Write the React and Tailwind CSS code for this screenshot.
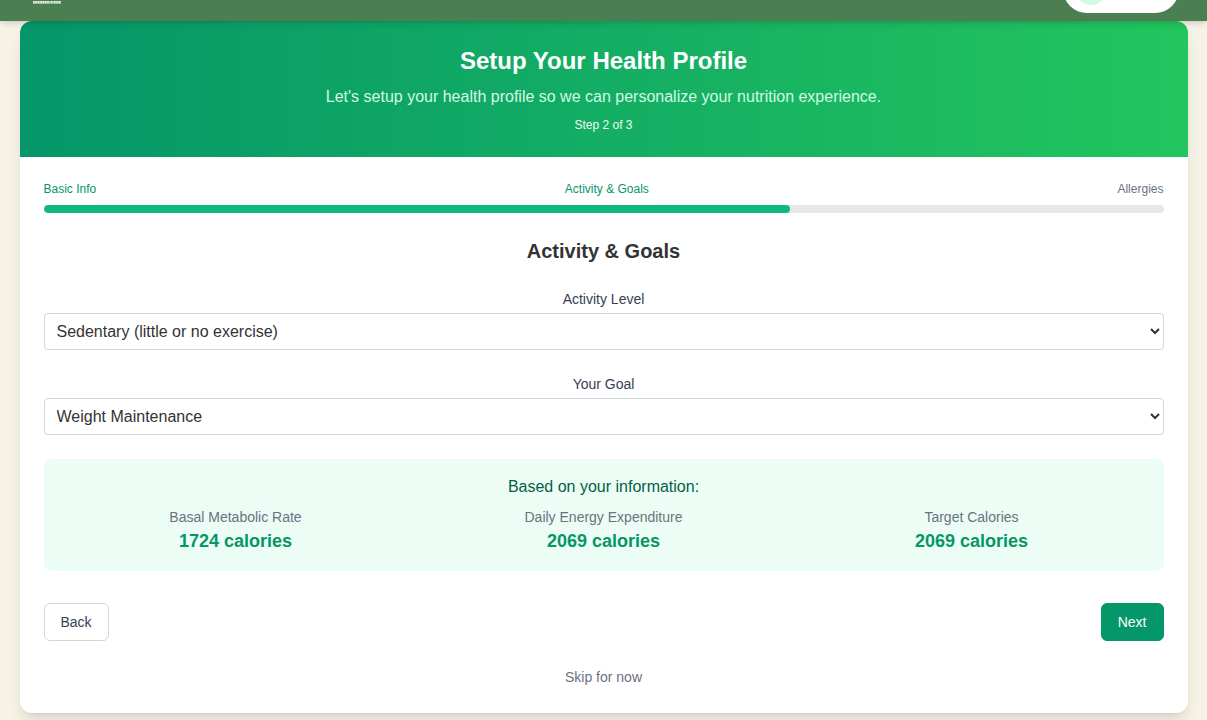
const label = "block text-center text-sm text-gray-700";
const select =
  "mt-1 block h-[37px] w-full rounded border border-gray-300 bg-white px-2 text-base text-[#333333]";

function Stat({ name, value }) {
  return (
    <div>
      <p className="text-sm text-[#6b7280]">{name}</p>
      <p className="text-lg font-bold text-[#059669]">{value}</p>
    </div>
  );
}

export default function App() {
  return (
    <div className="min-h-screen bg-[#f7f2e6] font-['Liberation_Sans',Arial,sans-serif] text-[#333333]">
      <header className="relative z-10 flex h-[21px] items-end justify-between overflow-hidden bg-[#4b7f52] pr-7 pl-8 shadow-md">
        <svg className="mb-[17px] h-3 w-8 shrink-0" viewBox="0 0 32 12" aria-hidden="true">
          <path d="M1 10.3H29" stroke="#a9c2aa" strokeWidth="2.6" />
          <path d="M1 10.3H17M19 10.3H21M22 10.3H29" stroke="#e3ebe0" strokeWidth="2.6" strokeDasharray="1.4 1" />
        </svg>
        <div className="mb-2 flex h-12 w-[116px] shrink-0 items-end rounded-full bg-white p-2 pl-3">
          <span className="size-8 rounded-full bg-[#d1fae5]" />
        </div>
      </header>

      <main className="mx-auto max-w-[1168px] pb-5">
        <div className="overflow-hidden rounded-xl bg-white shadow-lg">
          <div className="bg-[linear-gradient(to_right,#059669,#22c55e)] p-6 text-center text-white">
            <h1 className="text-2xl font-bold">Setup Your Health Profile</h1>
            <p className="mt-2 text-base text-[#d1fae5]">
              Let's setup your health profile so we can personalize your nutrition experience.
            </p>
            <p className="mt-2 text-xs text-[#ecfdf5]">Step 2 of 3</p>
          </div>

          <div className="p-6">
            <div className="flex justify-between text-xs text-[#059669]">
              <span>Basic Info</span>
              <span>Activity &amp; Goals</span>
              <span className="text-[#6b7280]">Allergies</span>
            </div>
            <div className="mt-2 h-2 overflow-hidden rounded-full bg-[#e5e7eb]">
              <div className="h-full w-2/3 rounded-full bg-[#10b981]" />
            </div>

            <h2 className="mt-6 text-center text-xl font-bold">Activity &amp; Goals</h2>

            <form className="mt-6" onSubmit={(e) => e.preventDefault()}>
              <label htmlFor="activity" className={label}>Activity Level</label>
              <select id="activity" className={select}>
                <option>Sedentary (little or no exercise)</option>
              </select>

              <label htmlFor="goal" className={label + " mt-6"}>Your Goal</label>
              <select id="goal" className={select}>
                <option>Weight Maintenance</option>
              </select>

              <section className="mt-6 rounded-lg bg-[#ecfdf5] p-4 text-center">
                <h3 className="text-base text-[#065f46]">Based on your information:</h3>
                <div className="mt-2 grid grid-cols-3 gap-4">
                  <Stat name="Basal Metabolic Rate" value="1724 calories" />
                  <Stat name="Daily Energy Expenditure" value="2069 calories" />
                  <Stat name="Target Calories" value="2069 calories" />
                </div>
              </section>

              <div className="mt-8 flex justify-between">
                <button type="button" className="rounded-md border border-gray-300 bg-white px-4 py-2 text-sm text-gray-700">
                  Back
                </button>
                <button type="submit" className="rounded-md border border-[#059669] bg-[#059669] px-4 py-2 text-sm text-white">
                  Next
                </button>
              </div>
            </form>

            <div className="mt-6 flex h-6 items-center justify-center">
              <button type="button" className="text-sm text-[#6b7280]">Skip for now</button>
            </div>
          </div>
        </div>
      </main>
    </div>
  );
}
